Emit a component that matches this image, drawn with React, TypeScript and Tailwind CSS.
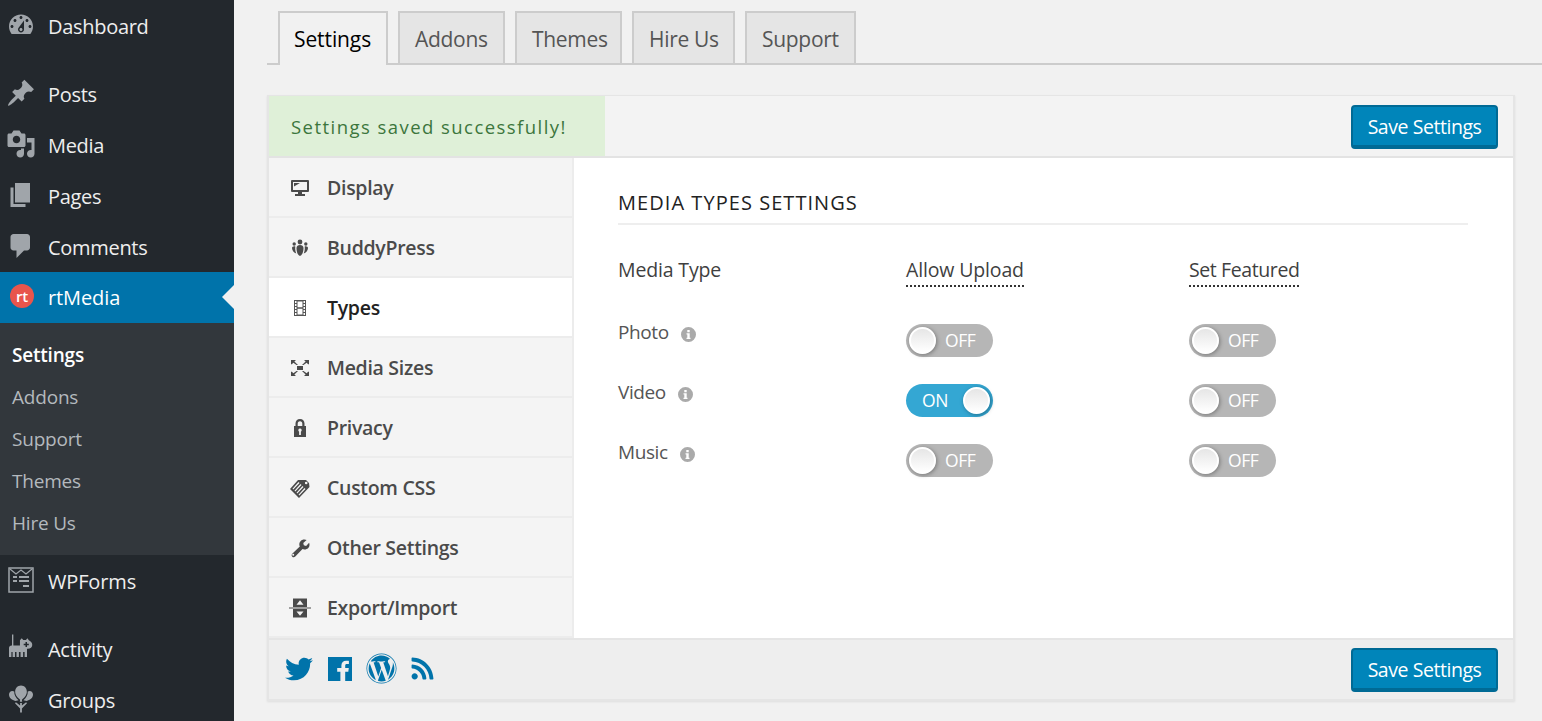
import React from "react";
import { FaTwitter, FaWordpress, FaRss } from "react-icons/fa";

const P = ({ d, className = "" }: { d: string; className?: string }) => (
  <svg viewBox="0 0 20 20" className={"w-[30px] h-[30px] fill-[#a0a5aa] " + className}>
    <path fillRule="evenodd" d={d} />
  </svg>
);

const icons = {
  dashboard:
    "M3.76 16h12.48c1.1-1.37 1.76-3.11 1.76-5 0-4.42-3.58-8-8-8s-8 3.58-8 8c0 1.89.66 3.63 1.76 5zM10 4c.55 0 1 .45 1 1s-.45 1-1 1-1-.45-1-1 .45-1 1-1zM6 6c.55 0 1 .45 1 1s-.45 1-1 1-1-.45-1-1 .45-1 1-1zm8 0c.55 0 1 .45 1 1s-.45 1-1 1-1-.45-1-1 .45-1 1-1zm-5.37 5.55L12 7v6c0 1.1-.9 2-2 2s-2-.9-2-2c0-.57.24-1.08.63-1.45zM4 10c.55 0 1 .45 1 1s-.45 1-1 1-1-.45-1-1 .45-1 1-1zm12 0c.55 0 1 .45 1 1s-.45 1-1 1-1-.45-1-1 .45-1 1-1zm-5 3c0-.55-.45-1-1-1s-1 .45-1 1 .45 1 1 1 1-.45 1-1z",
  posts:
    "M10.44 3.02l1.82-1.82 6.36 6.35-1.83 1.82c-1.05-.68-2.48-.57-3.41.36l-.75.75c-.92.93-1.04 2.35-.35 3.41l-1.83 1.82-2.41-2.41-2.8 2.79c-.42.42-3.38 2.71-3.8 2.29s1.86-3.39 2.28-3.81l2.79-2.79L4.1 9.36l1.83-1.82c1.05.69 2.48.57 3.4-.36l.75-.75c.93-.92 1.05-2.35.36-3.41z",
  media:
    "M13 11V4c0-.55-.45-1-1-1h-1.67L9 1H5L3.67 3H2c-.55 0-1 .45-1 1v7c0 .55.45 1 1 1h10c.55 0 1-.45 1-1zM7 4.5c1.38 0 2.5 1.12 2.5 2.5S8.38 9.5 7 9.5 4.5 8.38 4.5 7 5.62 4.5 7 4.5zM14 6h5v10.5c0 1.38-1.12 2.5-2.5 2.5S14 17.88 14 16.5s1.12-2.5 2.5-2.5c.17 0 .34.02.5.05V9h-3V6zm-4 8.05V13h2v3.5c0 1.38-1.12 2.5-2.5 2.5S7 17.88 7 16.5 8.12 14 9.5 14c.17 0 .34.02.5.05z",
  pages: "M6 15V2h10v13H6zm-1 1h8v2H3V5h2v11z",
  comments: "M5 2h9c1.1 0 2 .9 2 2v7c0 1.1-.9 2-2 2h-2l-5 5v-5H5c-1.1 0-2-.9-2-2V4c0-1.1.9-2 2-2z",
  activity:
    "M4 1h.9v7.300H4zM2 10c0-1 .7-1.700 1.700-1.700h5.600V4.800l1.200-1.300 1 1.100h1.800l1-1.100.9 1.300c1.500.7 2.300 1.900 2.300 3.200 0 1.500-1.200 2.500-3 2.500h-.5V16h-1.600v-3.400h-1V16H9.700v-3.400H8.600V16H7v-3.400H6V16H4.400v-3.400h-.8V16H2zM13 6v1.200h-1.200v1H13v1.200h1V8.200h1.200v-1H14V6z",
  groups:
    "M10 1c2.300 0 3.900 1.900 3.900 4.200 0 2.500-2 4.300-3.300 5.300l.2 1.300H9.200l.2-1.300C8.100 9.500 6.100 7.700 6.100 5.200 6.100 2.900 7.700 1 10 1zM4.200 4.600c.5 0 1 .1 1.300.4-.2 2.300 1.200 4.300 2.900 5.900l-2.200.4C4.200 10.700 2 9.400 2 7c0-1.400 1-2.400 2.200-2.400zm11.600 0C17 4.600 18 5.600 18 7c0 2.400-2.200 3.700-4.200 4.300l-2.200-.4c1.700-1.600 3.100-3.600 2.900-5.900.3-.3.8-.4 1.300-.4zM9.400 12.600h1.200v1.700l2.800-2.100.6.7-3.400 3.400V19H9.400v-2.700L6 12.900l.6-.7 2.800 2.100z",
};

const NavIcon = ({ name }: { name: string }) => {
  const c = "w-[22px] h-[22px] fill-[#4a4a4a]";
  switch (name) {
    case "display":
      return (
        <svg viewBox="0 0 22 22" className={c}>
          <path fillRule="evenodd" d="M3 3h16a1 1 0 0 1 1 1v10a1 1 0 0 1-1 1h-6v2h3v2H6v-2h3v-2H3a1 1 0 0 1-1-1V4a1 1 0 0 1 1-1zm1 2v8h14V5zm1 1h6l-6 3.500z" />
        </svg>
      );
    case "buddypress":
      return (
        <svg viewBox="0 0 22 22" className={c}>
          <circle cx="11" cy="5" r="2.400" />
          <circle cx="5.200" cy="7" r="1.700" />
          <circle cx="16.800" cy="7" r="1.700" />
          <path d="M7.500 11c0-2 1.500-3 3.500-3s3.500 1 3.500 3c0 3.500-1 7-3.500 8-2.500-1-3.500-4.500-3.500-8zM3 11c0-1 1-1.800 2.300-1.800.5 0 .8.100 1 .3-.3 2.700.1 5 1 7C5 16 3 13.500 3 11zm16 0c0-1-1-1.800-2.300-1.800-.5 0-.8.100-1 .3.300 2.700-.1 5-1 7 2.300-.5 4.300-3 4.300-5.500z" />
        </svg>
      );
    case "types":
      return (
        <svg viewBox="0 0 22 22" className="w-[22px] h-[22px] fill-[#555]">
          <path fillRule="evenodd" d="M5 3h12v16H5zm1 1v2h1.500V4zm0 3v2h1.500V7zm0 3v2h1.500v-2zm0 3v2h1.500v-2zm0 3v2h1.500v-2zM14.500 4v2H16V4zm0 3v2H16V7zm0 3v2H16v-2zm0 3v2H16v-2zm0 3v2H16v-2zM8.500 4.500v5.800h5V4.500zm0 7.200v5.800h5v-5.800z" />
        </svg>
      );
    case "sizes":
      return (
        <svg viewBox="0 0 22 22" className={c}>
          <path d="M8 9h6v4H8zM2 3h5l-1.600 1.600L9 8H7.500L4.300 5.700 2.900 7.300H2zm18 0v4.300h-.9l-1.400-1.600L14.500 8H13l3.600-3.400L15 3zM2 19v-4.300h.9l1.400 1.600L7.500 14H9l-3.600 3.400L7 19zm18 0h-5l1.600-1.600L13 14h1.500l3.200 2.300 1.400-1.600h.9z" />
        </svg>
      );
    case "privacy":
      return (
        <svg viewBox="0 0 22 22" className={c}>
          <path fillRule="evenodd" d="M11 2c2.800 0 4.500 2 4.500 4.600V9H17v11H5V9h1.500V6.600C6.500 4 8.200 2 11 2zm0 2.200c-1.500 0-2.300 1-2.300 2.500V9h4.600V6.700c0-1.500-.8-2.500-2.300-2.500zM11 11.500a1.800 1.800 0 0 0-.9 3.300V18h1.800v-3.200a1.800 1.800 0 0 0-.9-3.300z" />
        </svg>
      );
    case "css":
      return (
        <svg viewBox="0 0 22 22" className={c}>
          <path fillRule="evenodd" d="M9 3h8l3 3 .5 4L10 21 1 12zm8.200 1.700a1.300 1.300 0 1 0 0 2.600 1.300 1.300 0 0 0 0-2.600zM9.500 5 3.500 11.700l.8.800L10.500 6zm2 2L5.500 13.700l.8.800L12.500 8zm2 2-6 6.700.8.800L14.500 10zm2 2-6 6.700.8.800 6.200-6.500z" />
        </svg>
      );
    case "other":
      return (
        <svg viewBox="0 0 22 22" className={c}>
          <path fillRule="evenodd" d="M15.500 2.500c.8 0 1.500.2 2.100.5l-3.300 3 .5 2.300 2.300.6 3-3.200c.3.600.4 1.300.4 2 0 2.900-2.500 5-5.200 4.700-.7-.100-1.200-.2-1.800-.5l-7.200 7.700c-.8.900-2.200 1-3 .2-.9-.8-.9-2.200-.1-3l7.600-7.200c-.3-.6-.5-1.300-.5-2 0-2.800 2.300-5.100 4.700-5.100zM4.200 16.800a1 1 0 1 0 0 2 1 1 0 0 0 0-2z" />
        </svg>
      );
    default:
      return (
        <svg viewBox="0 0 22 22" className={c}>
          <path fillRule="evenodd" d="M4 1.500h14v8.500H4zm7 1.800L7.500 7.800h7zM0 10.500h22v1H0zM4 12h14v8.500H4zm3.500 2.500 3.500 4.200 3.500-4.200z" />
        </svg>
      );
  }
};

const font = "font-['Open_Sans','Noto_Sans',sans-serif]";

const Row = ({ icon, label, h = "h-[51px]" }: { icon: string; label: string; h?: string }) => (
  <div className={h + " shrink-0 flex items-center text-[#eee] text-[20px] tracking-[-0.3px]"}>
    <span className="ml-[6px] w-[42px] shrink-0 -mt-[3px]">
      <P d={icon} />
    </span>
    {label}
  </div>
);

const Sidebar = () => (
  <aside className="w-[234px] shrink-0 h-[721px] overflow-hidden bg-[#23282d] flex flex-col">
    <Row icon={icons.dashboard} label="Dashboard" h="h-[53px]" />
    <div className="h-[16px] shrink-0" />
    <Row icon={icons.posts} label="Posts" />
    <Row icon={icons.media} label="Media" />
    <Row icon={icons.pages} label="Pages" />
    <Row icon={icons.comments} label="Comments" h="h-[50px] pt-[1px]" />
    <div className="relative h-[51px] shrink-0 flex items-center bg-[#0073aa] text-white text-[20px] tracking-[-0.1px] pt-[1px]">
      <span className="ml-[10px] mr-[14px] -mt-[4px] w-[24px] h-[24px] rounded-full bg-[#e8554c] text-white flex items-center justify-center text-[15px] font-semibold leading-none">
        rt
      </span>
      rtMedia
      <span className="absolute right-0 top-[13px] border-y-[12px] border-y-transparent border-r-[12px] border-r-[#f1f1f1]" />
    </div>
    <div className="h-[232px] shrink-0 bg-[#32373c] pt-[11px] text-[19px] tracking-[-0.2px] text-[#b4b9be]">
      <div className="h-[42px] pl-[12px] flex items-center text-white font-semibold">Settings</div>
      <div className="h-[42px] pl-[12px] flex items-center">Addons</div>
      <div className="h-[42px] pl-[12px] flex items-center">Support</div>
      <div className="h-[42px] pl-[12px] flex items-center">Themes</div>
      <div className="h-[42px] pl-[12px] flex items-center">Hire Us</div>
    </div>
    <div className="h-[52px] shrink-0 flex items-center text-[#eee] text-[20px] tracking-[-0.15px] pt-[1px]">
      <span className="ml-[8px] mr-[14px] -mt-[3px]">
        <svg viewBox="0 0 26 26" className="w-[26px] h-[26px] fill-none stroke-[#a0a5aa]">
          <rect x="1" y="1" width="24" height="24" strokeWidth="1.500" />
          <path d="m2 2 6 5 5-4 5 4 6-5" strokeWidth="1.200" />
          <path d="M5 10h4M11 10h10M5 14h4M11 14h10M15 19h6" strokeWidth="2" />
        </svg>
      </span>
      WPForms
    </div>
    <div className="h-[17px] shrink-0" />
    <Row icon={icons.activity} label="Activity" />
    <Row icon={icons.groups} label="Groups" />
  </aside>
);

const Tabs = () => {
  const tabs: [string, string][] = [
    ["Addons", "w-[107px]"],
    ["Themes", "w-[107px]"],
    ["Hire Us", "w-[103px]"],
    ["Support", "w-[111px]"],
  ];
  return (
    <div className="h-[54px] mt-[11px] ml-[267px] pl-[11px] flex gap-[10px] border-b-2 border-[#ccc] text-[21px]">
      <div className="w-[110px] h-[54px] shrink-0 border-2 border-b-0 border-[#ccc] bg-[#f1f1f1] pl-[14px] pt-[2px] flex items-center text-black tracking-[-0.1px]">
        Settings
      </div>
      {tabs.map(([t, w]) => (
        <div
          key={t}
          className={w + " h-[52px] shrink-0 border-2 border-b-0 border-[#ccc] bg-[#e5e5e5] pl-[15px] pt-[3px] flex items-center text-[#555] tracking-[-0.3px]"}
        >
          {t}
        </div>
      ))}
    </div>
  );
};

const SaveBtn = ({ className = "" }: { className?: string }) => (
  <button
    className={
      "w-[147px] h-[44px] rounded-[4px] bg-[#0085ba] border-2 border-[#006a95] border-b-[4px] pt-[2px] text-white text-[19.500px] tracking-[-0.45px] flex items-center justify-center " +
      className
    }
  >
    Save Settings
  </button>
);

const navItems: [string, string][] = [
  ["display", "Display"],
  ["buddypress", "BuddyPress"],
  ["types", "Types"],
  ["sizes", "Media Sizes"],
  ["privacy", "Privacy"],
  ["css", "Custom CSS"],
  ["other", "Other Settings"],
  ["export", "Export/Import"],
];

const Toggle = ({ on = false }: { on?: boolean }) => (
  <div
    className={
      "w-[87px] h-[33px] rounded-full flex items-center px-[3px] text-white text-[17.500px] tracking-[-0.4px] " +
      (on ? "bg-[#34a7d3] justify-between pl-[16px]" : "bg-[#b6b6b6] gap-[9px]")
    }
  >
    {on && <span className="-mt-[1px]">ON</span>}
    <span className="w-[27px] h-[27px] rounded-full bg-gradient-to-b from-[#e6e6e6] to-white border-2 border-white shadow-[1px_1px_4px_rgba(0,0,0,0.35)]" />
    {!on && <span className="-mt-[1px]">OFF</span>}
  </div>
);

const Info = () => (
  <svg viewBox="0 0 15 15" className="w-[15px] h-[15px] fill-[#aaa]">
    <path
      fillRule="evenodd"
      d="M7.500 0a7.500 7.500 0 1 1 0 15 7.500 7.500 0 0 1 0-15zM6.300 3v2.200h2.400V3zM5.500 6.300v1.200h.8v3.200h-.8V12h4v-1.300h-.8V6.300z"
    />
  </svg>
);

const MediaRow = ({ label, upload = false }: { label: string; upload?: boolean }) => (
  <div className="grid grid-cols-[288px_283px_1fr] h-[60px] text-[19px] tracking-[-0.4px] text-[#555]">
    <div className="flex items-start pt-[1px] gap-[12px]">
      <span>{label}</span>
      <span className="mt-[9px]">
        <Info />
      </span>
    </div>
    <div className="pt-[7px]">
      <Toggle on={upload} />
    </div>
    <div className="pt-[7px]">
      <Toggle />
    </div>
  </div>
);

const Panel = () => (
  <div className="ml-[267px] mt-[30px] w-[1248px] border-2 border-t border-[#e5e5e5] shadow-[0_1px_2px_rgba(0,0,0,0.08)]">
    <div className="h-[60px] bg-[#f3f3f3] border-b-2 border-[#e3e3e3] box-content flex items-center justify-between pr-[15px]">
      <div className="w-[336px] h-full bg-[#dff0d8] text-[#3c763d] pl-[22px] pt-[2px] flex items-center text-[18.500px] tracking-[1.45px]">
        Settings saved successfully!
      </div>
      <SaveBtn className="mt-[1px]" />
    </div>
    <div className="h-[480px] flex bg-white">
      <nav className="w-[305px] shrink-0 border-r-2 border-[#ececec]">
        {navItems.map(([k, l]) => (
          <div
            key={k}
            className={
              "h-[60px] border-b-2 border-[#ececec] flex items-center pl-[20px] pt-[2px] gap-[16px] text-[19.500px] font-semibold tracking-[-0.3px] " +
              (k === "types" ? "bg-white text-[#222]" : "bg-[#f4f4f4] text-[#4a4a4a]")
            }
          >
            <NavIcon name={k} />
            {l}
          </div>
        ))}
      </nav>
      <section className="flex-1 pl-[44px] pr-[45px] pt-[30px]">
        <h2 className="h-[37px] border-b-2 border-[#eee] text-[20px] leading-[30px] font-medium tracking-[1.05px] text-[#222] uppercase">
          Media Types Settings
        </h2>
        <div className="grid grid-cols-[288px_283px_1fr] mt-[30px] mb-[30px] text-[19.500px] tracking-[-0.15px] text-[#3f3f3f] font-medium">
          <div>Media Type</div>
          <div>
            <span className="inline-block border-b-2 border-dotted border-[#333] pb-[1px]">Allow Upload</span>
          </div>
          <div>
            <span className="inline-block border-b-2 border-dotted border-[#333] pb-[1px] tracking-[-0.4px]">Set Featured</span>
          </div>
        </div>
        <MediaRow label="Photo" />
        <MediaRow label="Video" upload />
        <MediaRow label="Music" />
      </section>
    </div>
    <div className="h-[61px] bg-[#eee] border-t-2 border-[#e5e5e5] flex items-center justify-between pl-[16px] pr-[15px]">
      <div className="flex items-center text-[#0073aa] -mt-[2px]">
        <FaTwitter className="w-[28px] h-[28px]" />
        <svg viewBox="0 0 24 24" className="w-[24px] h-[24px] ml-[15px] fill-[#0073aa]">
          <path d="M0 0h24v24h-6.800v-9.300h3.100l.5-3.600h-3.600V8.800c0-1 .3-1.700 1.800-1.700h1.900V3.900c-.3 0-1.500-.1-2.800-.1-2.800 0-4.700 1.700-4.700 4.800v2.500H9.200v3.600h3.200V24H0z" />
        </svg>
        <FaWordpress className="w-[31px] h-[31px] ml-[14px]" />
        <FaRss className="w-[25px] h-[25px] ml-[13px]" />
      </div>
      <SaveBtn />
    </div>
  </div>
);

export default function App() {
  return (
    <div className={"w-[1542px] h-[721px] overflow-hidden flex bg-[#f1f1f1] " + font}>
      <Sidebar />
      <main className="flex-1 -ml-[234px] pl-[234px] min-w-0">
        <div className="-ml-[234px]">
          <Tabs />
          <Panel />
        </div>
      </main>
    </div>
  );
}
